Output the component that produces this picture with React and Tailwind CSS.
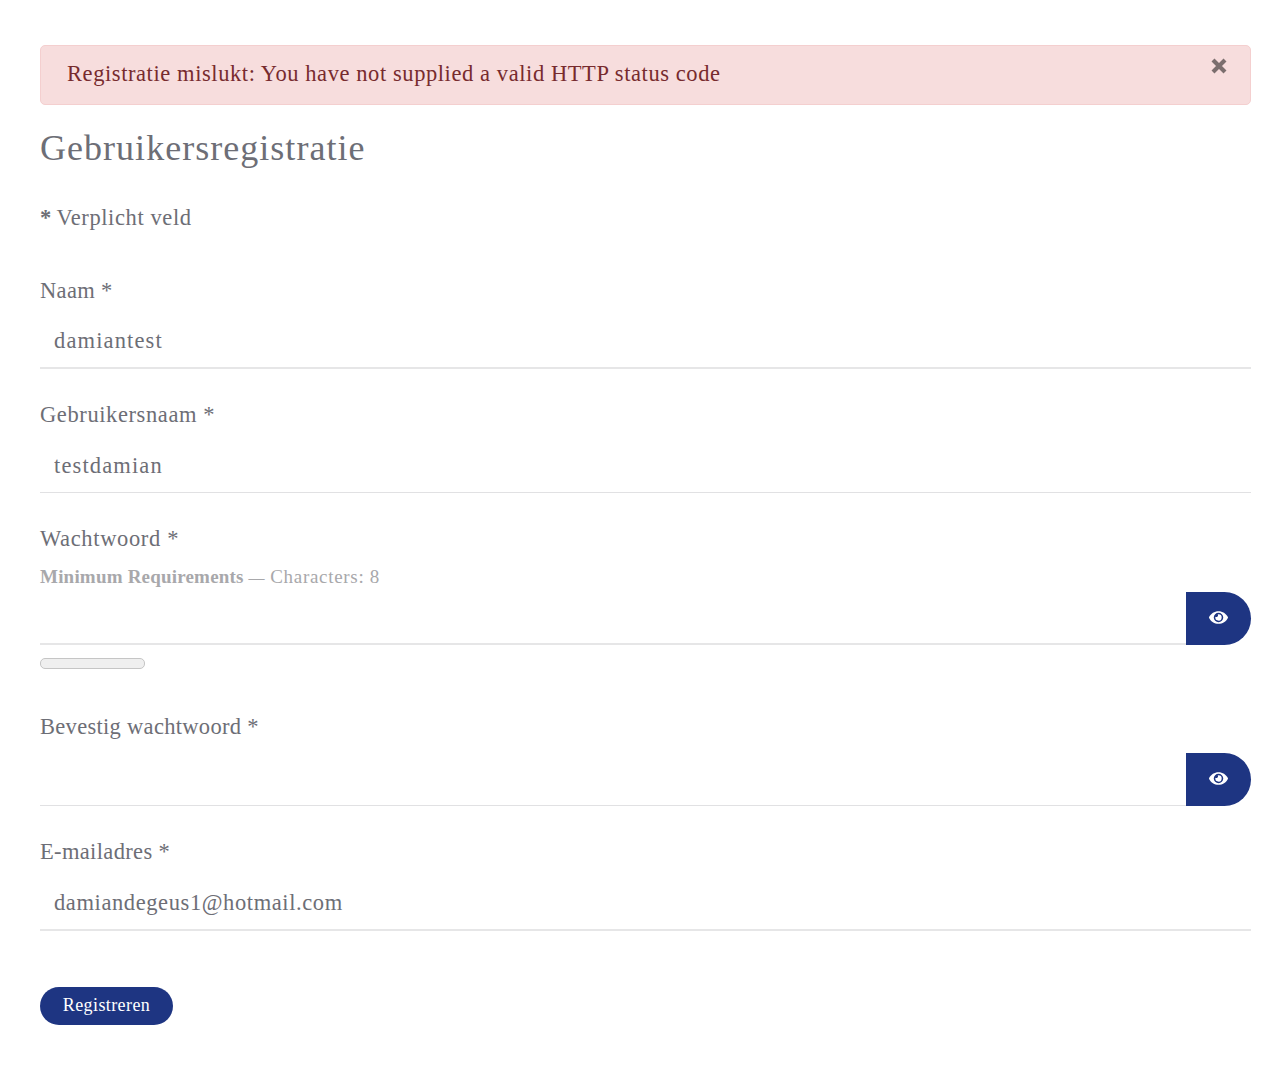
import { FaEye } from 'react-icons/fa';

function Label({ htmlFor, className = '', children }) {
  return (
    <label htmlFor={htmlFor} className={`block h-[42px] leading-8 ${className}`}>
      {children}
    </label>
  );
}

function TextField({ id, label, labelClass, value, inputClass = '', lineClass = 'h-[53px] border-b-2 border-[#e6e6e7] pb-px' }) {
  return (
    <div>
      <Label htmlFor={id} className={labelClass}>{label}</Label>
      <input
        id={id}
        type="text"
        defaultValue={value}
        className={`block w-full bg-white px-3.5 outline-none ${lineClass} ${inputClass}`}
      />
    </div>
  );
}

function PasswordInput({ id, lineClass = 'border-b border-[#e1e1e3]', iconClass = '' }) {
  return (
    <div className="flex h-[53px]">
      <input id={id} type="password" className={`min-w-0 flex-1 bg-white px-3.5 outline-none ${lineClass}`} />
      <button
        type="button"
        aria-label="Toon wachtwoord"
        className={`flex w-[65.5px] items-center justify-center rounded-r-[26.5px] bg-[#1e3582] text-white ${iconClass}`}
      >
        <FaEye size={19} />
      </button>
    </div>
  );
}

export default function App() {
  return (
    <main className="min-h-[1080px] bg-white pt-[45px] pr-[30px] pl-10 font-['Liberation_Serif',serif] text-[22.5px] text-[#6d6e76]">
      <div role="alert" className="flex h-[60px] items-start justify-between rounded-[5px] border border-[#f4cfcf] bg-[#f7dddd] pr-[23px] pl-[26px] text-[#772b2e]">
        <span className="mt-[12px] leading-8 tracking-[0.58px]">Registratie mislukt: You have not supplied a valid HTTP status code</span>
        <button type="button" aria-label="Sluiten" className="mt-[12px] text-[#7b6e6e]">
          <svg width="16" height="16" viewBox="0 0 16 16" fill="none" stroke="currentColor" strokeWidth="4.2">
            <path d="M2 2 14 14M14 2 2 14" />
          </svg>
        </button>
      </div>

      <form>
        <h1 className="mt-[19px] h-12 text-[36px] leading-12 tracking-[1.03px]">Gebruikersregistratie</h1>
        <p className="mt-[30px] leading-8">
          <strong className="tracking-[-0.5px]">*</strong> <span className="tracking-[0.6px]">Verplicht veld</span>
        </p>

        <div className="mt-10 flex flex-col gap-[29.5px]">
          <TextField id="name" label="Naam *" labelClass="pt-px tracking-[0.35px]" value="damiantest" inputClass="tracking-[1.13px]" />
          <TextField
            id="username"
            label="Gebruikersnaam *"
            labelClass="tracking-[0.6px]"
            value="testdamian"
            inputClass="tracking-[1.13px]"
            lineClass="mb-px h-[52px] border-b border-[#e1e1e3]"
          />

          <div>
            <Label htmlFor="password" className="tracking-[0.65px]">Wachtwoord *</Label>
            <div className="h-[27px] text-[19px] leading-[24px] text-[#a8a8ab]">
              <b className="tracking-[0.2px]">Minimum Requirements</b>{' '}
              <span className="mr-px text-[16px]">—</span>{' '}
              <span className="tracking-[0.7px]">Characters: 8</span>
            </div>
            <PasswordInput id="password" lineClass="border-b-2 border-[#e6e6e7]" iconClass="pb-[3px]" />
            <div className="mt-[13px] h-[11px] w-[105px] rounded-[5px] border-[1.5px] border-[#c5c5c5] bg-[#efefef]" />
          </div>

          <div className="mt-3">
            <Label htmlFor="confirm" className="tracking-[0.3px]">Bevestig wachtwoord *</Label>
            <PasswordInput id="confirm" iconClass="pb-px" />
          </div>

          <TextField
            id="email"
            label="E-mailadres *"
            labelClass="pt-px tracking-[0.35px]"
            value="damiandegeus1@hotmail.com"
            inputClass="tracking-[0.6px]"
            lineClass="h-[54px] border-b-2 border-[#e6e6e7]"
          />
        </div>

        <button type="button" className="mt-14 flex h-[38px] w-[133px] items-center justify-center rounded-full bg-[#1e3582] pb-px text-[18px] tracking-[0.4px] text-white">
          Registreren
        </button>
      </form>
    </main>
  );
}
